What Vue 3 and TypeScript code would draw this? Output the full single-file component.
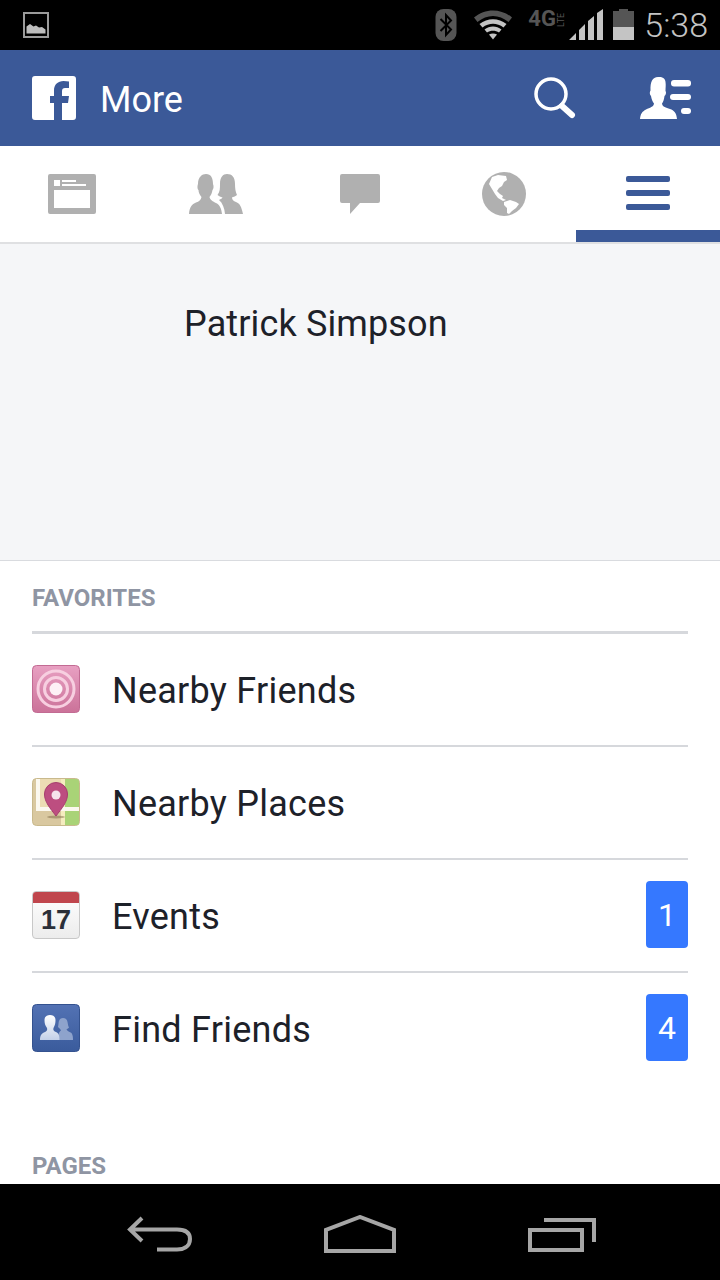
<script setup lang="ts">
interface Row { label: string; icon: string; badge?: number }
const rows: Row[] = [
  { label: 'Nearby Friends', icon: 'friends' },
  { label: 'Nearby Places', icon: 'places' },
  { label: 'Events', icon: 'events', badge: 1 },
  { label: 'Find Friends', icon: 'find', badge: 4 },
]
</script>

<template>
  <div class="phone">
    <div class="status">
      <svg class="st-image" width="26" height="26" viewBox="0 0 26 26">
        <rect x="1" y="1" width="24" height="24" fill="none" stroke="#9b9b9b" stroke-width="2" />
        <path d="M3.500 21.500V14.500L7 12L10.500 14.500L13 13.500L16 15.500L19 15L22.500 17.500V21.500Z" fill="#bdbdbd" />
      </svg>
      <svg class="st-bt" width="22" height="32" viewBox="0 0 22 32">
        <rect x="0.500" y="0" width="21" height="32" rx="8" fill="#555" />
        <path d="M5.500 10L16 20.500L11 26V6L16 11.500L5.500 22" fill="none" stroke="#000" stroke-width="2" />
      </svg>
      <svg class="st-wifi" width="38" height="30" viewBox="0 0 38 30">
        <path d="M0 7.500C11 -2 27 -2 38 7.500L34.500 12C25 4 13 4 3.500 12Z" fill="#555" />
        <path d="M5.500 14C13.500 7.500 24.500 7.500 32.500 14L29.500 17.500C23 12.500 15 12.500 8.500 17.500Z" fill="#c4c4c4" />
        <path d="M10.500 19.500C15.500 15.500 22.500 15.500 27.500 19.500L25 22.500C21.500 20 16.500 20 13 22.500Z" fill="#c4c4c4" />
        <path d="M15 24.500C17.500 23 20.500 23 23 24.500L19 29.500Z" fill="#c4c4c4" />
      </svg>
      <div class="st-net"><span class="st-4g">4G</span><span class="st-lte">LTE</span></div>
      <svg class="st-signal" width="35" height="32" viewBox="0 0 35 32">
        <path d="M0 31L7 24V31ZM10 21L16 15V31H10ZM19 12L25 7V31H19ZM28 4L34 0V31H28Z" fill="#c4c4c4" />
      </svg>
      <svg class="st-battery" width="21" height="32" viewBox="0 0 21 32">
        <path d="M6 0H15V2H21V18H0V2H6Z" fill="#555" />
        <rect x="0" y="18" width="21" height="13" fill="#c4c4c4" />
      </svg>
      <span class="st-time">5:38</span>
    </div>

    <header class="topbar">
      <svg class="logo" width="44" height="44" viewBox="0 0 44 44">
        <path d="M3 0H41A3 3 0 0 1 44 3V41A3 3 0 0 1 41 44H30V27H36L37 20H30V15C30 13 31 12 33 12H37V5.500C35.500 5.200 33.500 5 31.500 5C26 5 22 8.500 22 14.500V20H18V27H22V44H3A3 3 0 0 1 0 41V3A3 3 0 0 1 3 0Z" fill="#fff" />
      </svg>
      <h1 class="title">More</h1>
      <svg class="search" width="42" height="42" viewBox="0 0 42 42">
        <circle cx="17" cy="17" r="15" fill="none" stroke="#fff" stroke-width="3.500" />
        <path d="M28 29L38 38" stroke="#fff" stroke-width="6" stroke-linecap="round" />
      </svg>
      <svg class="people" width="52" height="44" viewBox="0 0 52 44">
        <path d="M0 43C0.500 38 2 35.500 6 33.500C10 31.500 13.500 31 14 27.500C12.500 25.500 11.500 23 11 20C9.500 19 9.500 15.500 10.500 14.500C10 6 12.500 1 18 1C22 0.500 25.500 2.500 25.500 6C26 9 25.500 12 25.500 15C26.500 16 26 19 24.500 20C24 23 23.500 25.500 22 27.500C22.500 31 26 31.500 30 33C34 34.500 36.500 37 37 43Z" fill="#fff" />
        <rect x="31" y="4" width="20" height="6.500" rx="3" fill="#fff" />
        <rect x="30" y="18" width="21" height="6" rx="3" fill="#fff" />
        <rect x="41" y="32" width="10" height="6" rx="3" fill="#fff" />
      </svg>
    </header>

    <nav class="tabs">
      <div class="tab">
        <svg width="48" height="40" viewBox="0 0 48 40">
          <path fill-rule="evenodd" d="M2 0H46A2 2 0 0 1 48 2V38A2 2 0 0 1 46 40H2A2 2 0 0 1 0 38V2A2 2 0 0 1 2 0ZM6 16V34H42V16ZM6 6V12H12V6ZM14 6V8H28V6ZM14 10V12H38V10Z" fill="#b0b0b0" />
        </svg>
      </div>
      <div class="tab">
        <svg width="54" height="40" viewBox="0 0 54 40">
          <path d="M0 40C0.500 33 3 30 7 28.500C10 27.500 12 26 12.500 23C10.500 21 9.500 18 9.500 16C8 15 8.500 11 9 10C9 3 13 0 17 0C22 0 24 4 24 10C25 12 24.500 15 23.500 16C23 19 22 21 20.500 23C21 26 24 27.500 27 29C31 31 32.500 35 33 40Z" fill="#b0b0b0" />
          <path d="M36 40C35.500 34 33.500 29 30 26C32 25 33 24.500 33.500 23.500C31.500 23 30 22 28.500 21C31 18 31 14 31 10C31 3 34 0 38 0C43 0 46 3 46 10C46 14 46.500 18 48 21C46 22.500 44 23 43 23.500C43 25.500 44.500 27 47 28C51 29.500 52.500 33 54 40Z" fill="#b0b0b0" />
        </svg>
      </div>
      <div class="tab">
        <svg width="40" height="40" viewBox="0 0 40 40">
          <path d="M2 0H38A2 2 0 0 1 40 2V27A2 2 0 0 1 38 29H20L10 40V29H2A2 2 0 0 1 0 27V2A2 2 0 0 1 2 0Z" fill="#b0b0b0" />
        </svg>
      </div>
      <div class="tab">
        <svg width="44" height="44" viewBox="0 0 44 44">
          <circle cx="22" cy="22" r="22" fill="#b0b0b0" />
          <path d="M10 5L16 3L24 4L25 8L22 10L20 14L17 16L15 19L18 22L21 24L20 26L24 28L21 29L16 26L13 22L10 17L7 12Z" fill="#fff" />
          <path d="M22 30L28 28L34 30L37 32L34 36L30 39L27 42L25 41L25 36L22 33Z" fill="#fff" />
        </svg>
      </div>
      <div class="tab active">
        <div class="menu"><i></i><i></i><i></i></div>
      </div>
    </nav>

    <section class="profile">
      <div class="name">Patrick Simpson</div>
    </section>

    <main class="content">
      <div class="label">FAVORITES</div>
      <ul class="list">
        <li v-for="r in rows" :key="r.label" class="row">
          <svg v-if="r.icon === 'friends'" class="ico" width="48" height="48" viewBox="0 0 48 48">
            <defs>
              <linearGradient id="pink" x1="0" y1="0" x2="0" y2="1">
                <stop offset="0" stop-color="#e8a0c2" />
                <stop offset="1" stop-color="#cb7299" />
              </linearGradient>
            </defs>
            <rect x="0.500" y="0.500" width="47" height="47" rx="4" fill="url(#pink)" stroke="#c26b93" />
            <circle cx="24" cy="24" r="18" fill="none" stroke="#f7cfe0" stroke-width="3" />
            <circle cx="24" cy="24" r="11.500" fill="none" stroke="#f7cfe0" stroke-width="3" />
            <circle cx="24" cy="24" r="6.500" fill="#fdf1f6" />
          </svg>
          <svg v-else-if="r.icon === 'places'" class="ico" width="48" height="48" viewBox="0 0 48 48">
            <rect x="0.500" y="0.500" width="47" height="47" rx="4" fill="#d9c8a0" stroke="#c9b98c" />
            <path d="M8 1H33V31H8Z" fill="#ecdcb4" />
            <path d="M29 1H33V47H29Z" fill="#f5ecc0" />
            <path d="M33 1H44A3 3 0 0 1 47 4V44A3 3 0 0 1 44 47H33Z" fill="#a9d377" />
            <path d="M6 1V31H47" fill="none" stroke="#fbf8ef" stroke-width="4" />
            <ellipse cx="24" cy="39" rx="9" ry="1.500" fill="#7d6a45" opacity="0.500" />
            <path d="M24 38C18 30 12.500 24 12.500 16A11.500 11.500 0 0 1 35.500 16C35.500 24 30 30 24 38Z" fill="#bd4e80" stroke="#a63e6e" />
            <circle cx="24" cy="17" r="4.500" fill="#f6e4ec" />
          </svg>
          <div v-else-if="r.icon === 'events'" class="ico cal">
            <div class="cal-top"></div>
            <div class="cal-num">17</div>
          </div>
          <svg v-else class="ico" width="48" height="48" viewBox="0 0 48 48">
            <defs>
              <linearGradient id="blue" x1="0" y1="0" x2="0" y2="1">
                <stop offset="0" stop-color="#5372b4" />
                <stop offset="1" stop-color="#3a5b9c" />
              </linearGradient>
              <linearGradient id="man" x1="0" y1="0" x2="0" y2="1">
                <stop offset="0" stop-color="#ffffff" />
                <stop offset="1" stop-color="#c3d0e8" />
              </linearGradient>
            </defs>
            <rect x="0.500" y="0.500" width="47" height="47" rx="4" fill="url(#blue)" stroke="#34528f" />
            <path d="M26 36C26 30 27 28 29 26.500C28 24 26.500 24 26 23C26.500 21 26.500 18 27 17C27.500 15 29 14 31 14C33.500 14 35 15.500 35.500 18C36 20 36 22 37 23.500C36 24.500 35 25 34.500 25.500C35 27 38 28 39.500 29C41 31 41 34 41 36Z" fill="#8ea3cc" />
            <path d="M8 36C8 31 10 29 13 28C15 27 15.500 26 15 24C13 21.500 12.500 19 12.500 16C12.500 12.500 15 11 18 11C21.500 11 23.500 13 23.500 16C23.500 19 23 21.500 21.500 24C21 26 21.500 27 24 28C26.500 29 27.500 31 27.500 36Z" fill="url(#man)" />
          </svg>
          <span class="row-label">{{ r.label }}</span>
          <span v-if="r.badge" class="badge">{{ r.badge }}</span>
        </li>
      </ul>
      <div class="label pages">PAGES</div>
    </main>

    <footer class="navbar">
      <svg width="66" height="36" viewBox="0 0 66 36">
        <path d="M15 2L3 13.500L15 25M3 13.500H50C56 13.500 63 15 63 23C63 31 56 33.500 50 33.500H30" fill="none" stroke="#a6a6a6" stroke-width="4" />
      </svg>
      <svg width="72" height="38" viewBox="0 0 72 38">
        <path d="M2 36V15L36 2L70 15V36Z" fill="none" stroke="#a6a6a6" stroke-width="4" />
      </svg>
      <svg class="recents" width="68" height="34" viewBox="0 0 68 34">
        <path d="M2 12H54V32H2Z" fill="none" stroke="#a6a6a6" stroke-width="4" />
        <path d="M16 2H66V24" fill="none" stroke="#a6a6a6" stroke-width="4" />
      </svg>
    </footer>
  </div>
</template>

<style scoped>
.phone {
  width: 720px;
  height: 1280px;
  display: flex;
  flex-direction: column;
  overflow: hidden;
  background: #fff;
  font-family: Roboto, "Liberation Sans", sans-serif;
  color: #1d2129;
}
.status {
  flex: 0 0 50px;
  height: 50px;
  background: #000;
  display: flex;
  align-items: center;
  padding: 0 12px 0 23px;
  box-sizing: border-box;
}
.st-image { margin-right: auto; }
.st-bt { margin-right: 17px; }
.st-wifi { margin-right: 16px; }
.st-net {
  width: 40px;
  height: 32px;
  display: flex;
  align-items: flex-start;
  color: #555;
  margin-right: 1px;
}
.st-4g { font-size: 22px; font-weight: 700; line-height: 20px; }
.st-lte {
  font-size: 9px;
  line-height: 10px;
  writing-mode: vertical-rl;
  transform: rotate(180deg);
  margin-top: 1px;
  height: 17px;
}
.st-signal { margin-right: 9px; }
.st-battery { margin-right: 10px; }
.st-time {
  font-size: 34px;
  font-weight: 300;
  color: #c4c4c4;
  line-height: 34px;
}
.topbar {
  flex: 0 0 96px;
  height: 96px;
  background: #3b5998;
  display: flex;
  align-items: center;
  padding: 0 28px 0 32px;
  box-sizing: border-box;
}
.title {
  margin: 0 auto 0 24px;
  padding-top: 3px;
  font-size: 36px;
  font-weight: 400;
  color: #fff;
}
.search { margin-right: 64px; }
.tabs {
  flex: 0 0 98px;
  height: 98px;
  display: grid;
  grid-template-columns: repeat(5, 144px);
  border-bottom: 2px solid #dfe0e2;
  box-sizing: border-box;
}
.tab {
  display: flex;
  align-items: center;
  justify-content: center;
  box-sizing: border-box;
}
.tab.active {
  border-bottom: 12px solid #3b5998;
  padding-top: 10px;
}
.menu {
  width: 44px;
  display: flex;
  flex-direction: column;
  gap: 8px;
}
.menu i {
  height: 6px;
  border-radius: 2px;
  background: #3b5998;
}
.profile {
  flex: 0 0 317px;
  height: 317px;
  background: #f5f6f8;
  border-bottom: 1px solid #d9dbdf;
  box-sizing: border-box;
}
.name {
  margin: 58px 0 0 184px;
  font-size: 36px;
  line-height: 44px;
  letter-spacing: 0.13px;
}
.content {
  flex: 1;
  overflow: hidden;
  padding: 0 32px;
}
.label {
  font-size: 24px;
  font-weight: 700;
  color: #8f95a3;
  line-height: 28px;
  padding: 23px 0 19px;
}
.pages { padding-top: 68px; padding-bottom: 0; }
.list {
  list-style: none;
  margin: 0;
  padding: 0;
}
.row {
  height: 113px;
  box-sizing: border-box;
  border-top: 2px solid #d6d8dc;
  padding-bottom: 2px;
  display: flex;
  align-items: center;
  color: #1d2129;
}
.row:first-child {
  height: 114px;
  border-top-width: 3px;
}
.ico { flex: 0 0 48px; width: 48px; height: 48px; }
.row-label {
  margin-left: 32px;
  padding-top: 4px;
  font-size: 36px;
  letter-spacing: 0.25px;
}
.badge {
  margin-left: auto;
  width: 42px;
  height: 67px;
  border-radius: 4px;
  background: #3578ff;
  color: #fff;
  font-size: 32px;
  display: flex;
  align-items: center;
  justify-content: center;
}
.cal {
  box-sizing: border-box;
  border: 1px solid #c8c8c8;
  border-radius: 4px;
  overflow: hidden;
  background: linear-gradient(#fff, #ececec);
  display: flex;
  flex-direction: column;
}
.cal-top {
  flex: 0 0 11px;
  background: #c0464d;
}
.cal-num {
  font-family: "Liberation Sans", sans-serif;
  font-weight: 700;
  font-size: 27px;
  line-height: 34px;
  text-align: center;
  color: #2b2f38;
}
.navbar {
  flex: 0 0 96px;
  height: 96px;
  background: #000;
  display: flex;
  align-items: center;
  padding: 4px 124px 0 127px;
  justify-content: space-between;
  box-sizing: border-box;
}
.recents { margin: 2px 0 0 1px; }
</style>

<style>
html, body { margin: 0; padding: 0; background: #000; }
</style>
